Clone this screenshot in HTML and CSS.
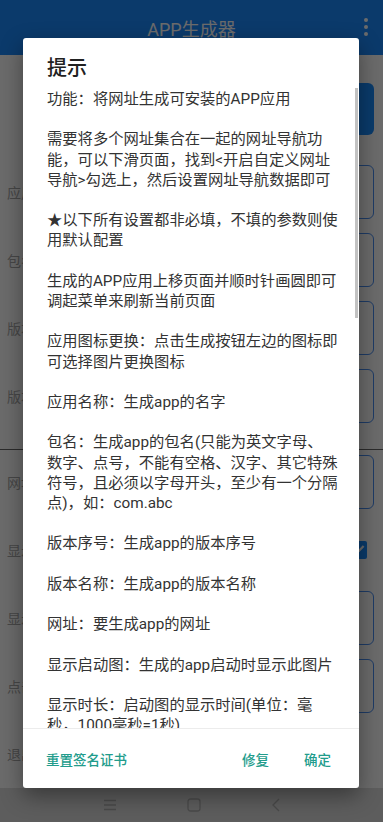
FILE: index.html
```html
<!DOCTYPE html>
<html lang="zh-CN">
<head>
<meta charset="UTF-8">
<meta name="viewport" content="width=device-width, initial-scale=1.0">
<title>APP生成器</title>
<link rel="stylesheet" href="styles.css">
</head>
<body>

<!-- Hauptseite (liegt unter dem Dialog) -->
<div class="app">
  <header class="appbar">
    <span class="appbar-title">APP生成器</span>
    <span class="overflow"><i></i><i></i><i></i></span>
  </header>

  <main class="form">
    <div class="build-row">
      <span class="app-icon"></span>
      <button class="build-button">生成APP</button>
    </div>

    <div class="row"><span class="label">应用名称</span><span class="field"></span></div>
    <div class="row"><span class="label">包名</span><span class="field"></span></div>
    <div class="row"><span class="label">版本序号</span><span class="field"></span></div>
    <div class="row"><span class="label">版本名称</span><span class="field"></span></div>

    <hr class="divider">

    <div class="row"><span class="label">网址</span><span class="field"></span></div>
    <div class="row">
      <span class="label">显示启动图</span>
      <svg class="checkbox" width="18" height="18" viewBox="0 0 18 18">
        <rect x="0" y="0" width="18" height="18" rx="2" fill="#1a8cff"/>
        <path d="M3.5 9.2 L7.2 12.8 L14.6 5" fill="none" stroke="#fff" stroke-width="2.2"/>
      </svg>
    </div>
    <div class="row"><span class="label">显示时长</span><span class="field"></span></div>
    <div class="row"><span class="label">点击</span><span class="field"></span></div>
    <div class="row"><span class="label">退出</span></div>
  </main>

  <nav class="navbar">
    <svg width="14" height="12" viewBox="0 0 14 12"><path d="M1 1.5h12M1 6h12M1 10.5h12" stroke="#b0b0b0" stroke-width="1.3"/></svg>
    <svg width="14" height="14" viewBox="0 0 14 14"><rect x="1" y="1" width="12" height="12" rx="2.5" fill="none" stroke="#b0b0b0" stroke-width="1.3"/></svg>
    <svg width="10" height="14" viewBox="0 0 10 14"><path d="M8 1L2 7l6 6" fill="none" stroke="#b0b0b0" stroke-width="1.3"/></svg>
  </nav>
</div>

<!-- Hinweis-Dialog -->
<div class="scrim">
  <div class="dialog">
    <h2 class="dialog-title">提示</h2>
    <div class="dialog-body">
      <p>功能：将网址生成可安装的APP应用</p>
      <p>需要将多个网址集合在一起的网址导航功<br>能，可以下滑页面，找到&lt;开启自定义网址<br>导航&gt;勾选上，然后设置网址导航数据即可</p>
      <p>★以下所有设置都非必填，不填的参数则使<br>用默认配置</p>
      <p>生成的APP应用上移页面并顺时针画圆即可<br>调起菜单来刷新当前页面</p>
      <p>应用图标更换：点击生成按钮左边的图标即<br>可选择图片更换图标</p>
      <p>应用名称：生成app的名字</p>
      <p>包名：生成app的包名(只能为英文字母、<br>数字、点号，不能有空格、汉字、其它特殊<br>符号，且必须以字母开头，至少有一个分隔<br>点)，如：com.abc</p>
      <p>版本序号：生成app的版本序号</p>
      <p>版本名称：生成app的版本名称</p>
      <p>网址：要生成app的网址</p>
      <p>显示启动图：生成的app启动时显示此图片</p>
      <p>显示时长：启动图的显示时间(单位：毫<br>秒，1000毫秒=1秒)</p>
      <span class="scroll-thumb"></span>
    </div>
    <div class="dialog-actions">
      <button class="text-button">重置签名证书</button>
      <button class="text-button push">修复</button>
      <button class="text-button">确定</button>
    </div>
  </div>
</div>

</body>
</html>
```

FILE: styles.css
```css
/* Grundlayout */
body {
  margin: 0;
  width: 383px;
  height: 822px;
  overflow: hidden;
  position: relative;
  font-family: Roboto, "Noto Sans CJK SC", sans-serif;
  background-color: #fff;
}
.app {
  display: flex;
  flex-direction: column;
  height: 822px;
}
/* Titelleiste */
.appbar {
  height: 55px;
  flex-shrink: 0;
  background-color: #1c8aff;
  color: #fff;
  display: flex;
  align-items: center;
  justify-content: center;
  position: relative;
}
.appbar-title {
  font-size: 18px;
}
.overflow {
  position: absolute;
  right: 15px;
  top: 18px;
  display: flex;
  flex-direction: column;
  gap: 3px;
}
.overflow i {
  display: block;
  width: 4px;
  height: 4px;
  border-radius: 50%;
  background-color: #fff;
}
/* Formular */
.form {
  flex: 1;
  padding: 28px 9px 0 7px;
  display: flex;
  flex-direction: column;
  gap: 14px;
}
.build-row {
  display: flex;
  height: 52px;
  gap: 12px;
  margin-bottom: 16px;
}
.app-icon {
  width: 52px;
}
.build-button {
  flex: 1;
  border: none;
  border-radius: 6px;
  background-color: #1a8cff;
  color: #fff;
  font: inherit;
}
.row {
  height: 54px;
  display: flex;
  align-items: center;
  gap: 10px;
  flex-shrink: 0;
}
.label {
  width: 70px;
  font-size: 14px;
  color: #aaa;
  white-space: nowrap;
}
.field {
  flex: 1;
  align-self: stretch;
  border: 1px solid #4a8ff3;
  border-radius: 6px;
}
.checkbox {
  margin-left: auto;
  margin-right: 7px;
}
.divider {
  border: none;
  border-top: 1px solid #666;
  margin: 12px -9px -9px -7px;
}
/* Navigationsleiste */
.navbar {
  height: 34px;
  flex-shrink: 0;
  background-color: #ddd;
  display: flex;
  align-items: center;
  justify-content: center;
  gap: 70px;
}
/* Abdunkelung + Dialog */
.scrim {
  position: absolute;
  inset: 0;
  background-color: rgba(0, 0, 0, 0.58);
  padding: 38px 0 0 23px;
}
.dialog {
  width: 336px;
  height: 750px;
  background-color: #fff;
  border-radius: 3px;
  box-shadow: 0 8px 22px rgba(0, 0, 0, 0.4);
  display: flex;
  flex-direction: column;
}
.dialog-title {
  margin: 0 0 6px;
  padding: 16px 24px 0;
  font-size: 20px;
  line-height: 28px;
  font-weight: 500;
  color: #212121;
}
.dialog-body {
  flex: 1;
  overflow: hidden;
  position: relative;
  padding: 1px 14px 0 24px;
  font-size: 15.3px;
  line-height: 20.2px;
  color: #333;
}
.dialog-body p {
  margin: 0 0 20.2px;
}
.scroll-thumb {
  position: absolute;
  top: 0;
  right: 1px;
  width: 3px;
  height: 230px;
  background-color: #c2c2c2;
}
.dialog-actions {
  height: 59px;
  flex-shrink: 0;
  border-top: 1px solid #ececec;
  display: flex;
  align-items: center;
  gap: 35px;
  padding: 0 28px 0 23px;
}
.text-button {
  border: none;
  background: none;
  padding: 0;
  font-family: inherit;
  font-size: 13.5px;
  font-weight: 500;
  color: #229c8c;
}
.push {
  margin-left: auto;
}
```
